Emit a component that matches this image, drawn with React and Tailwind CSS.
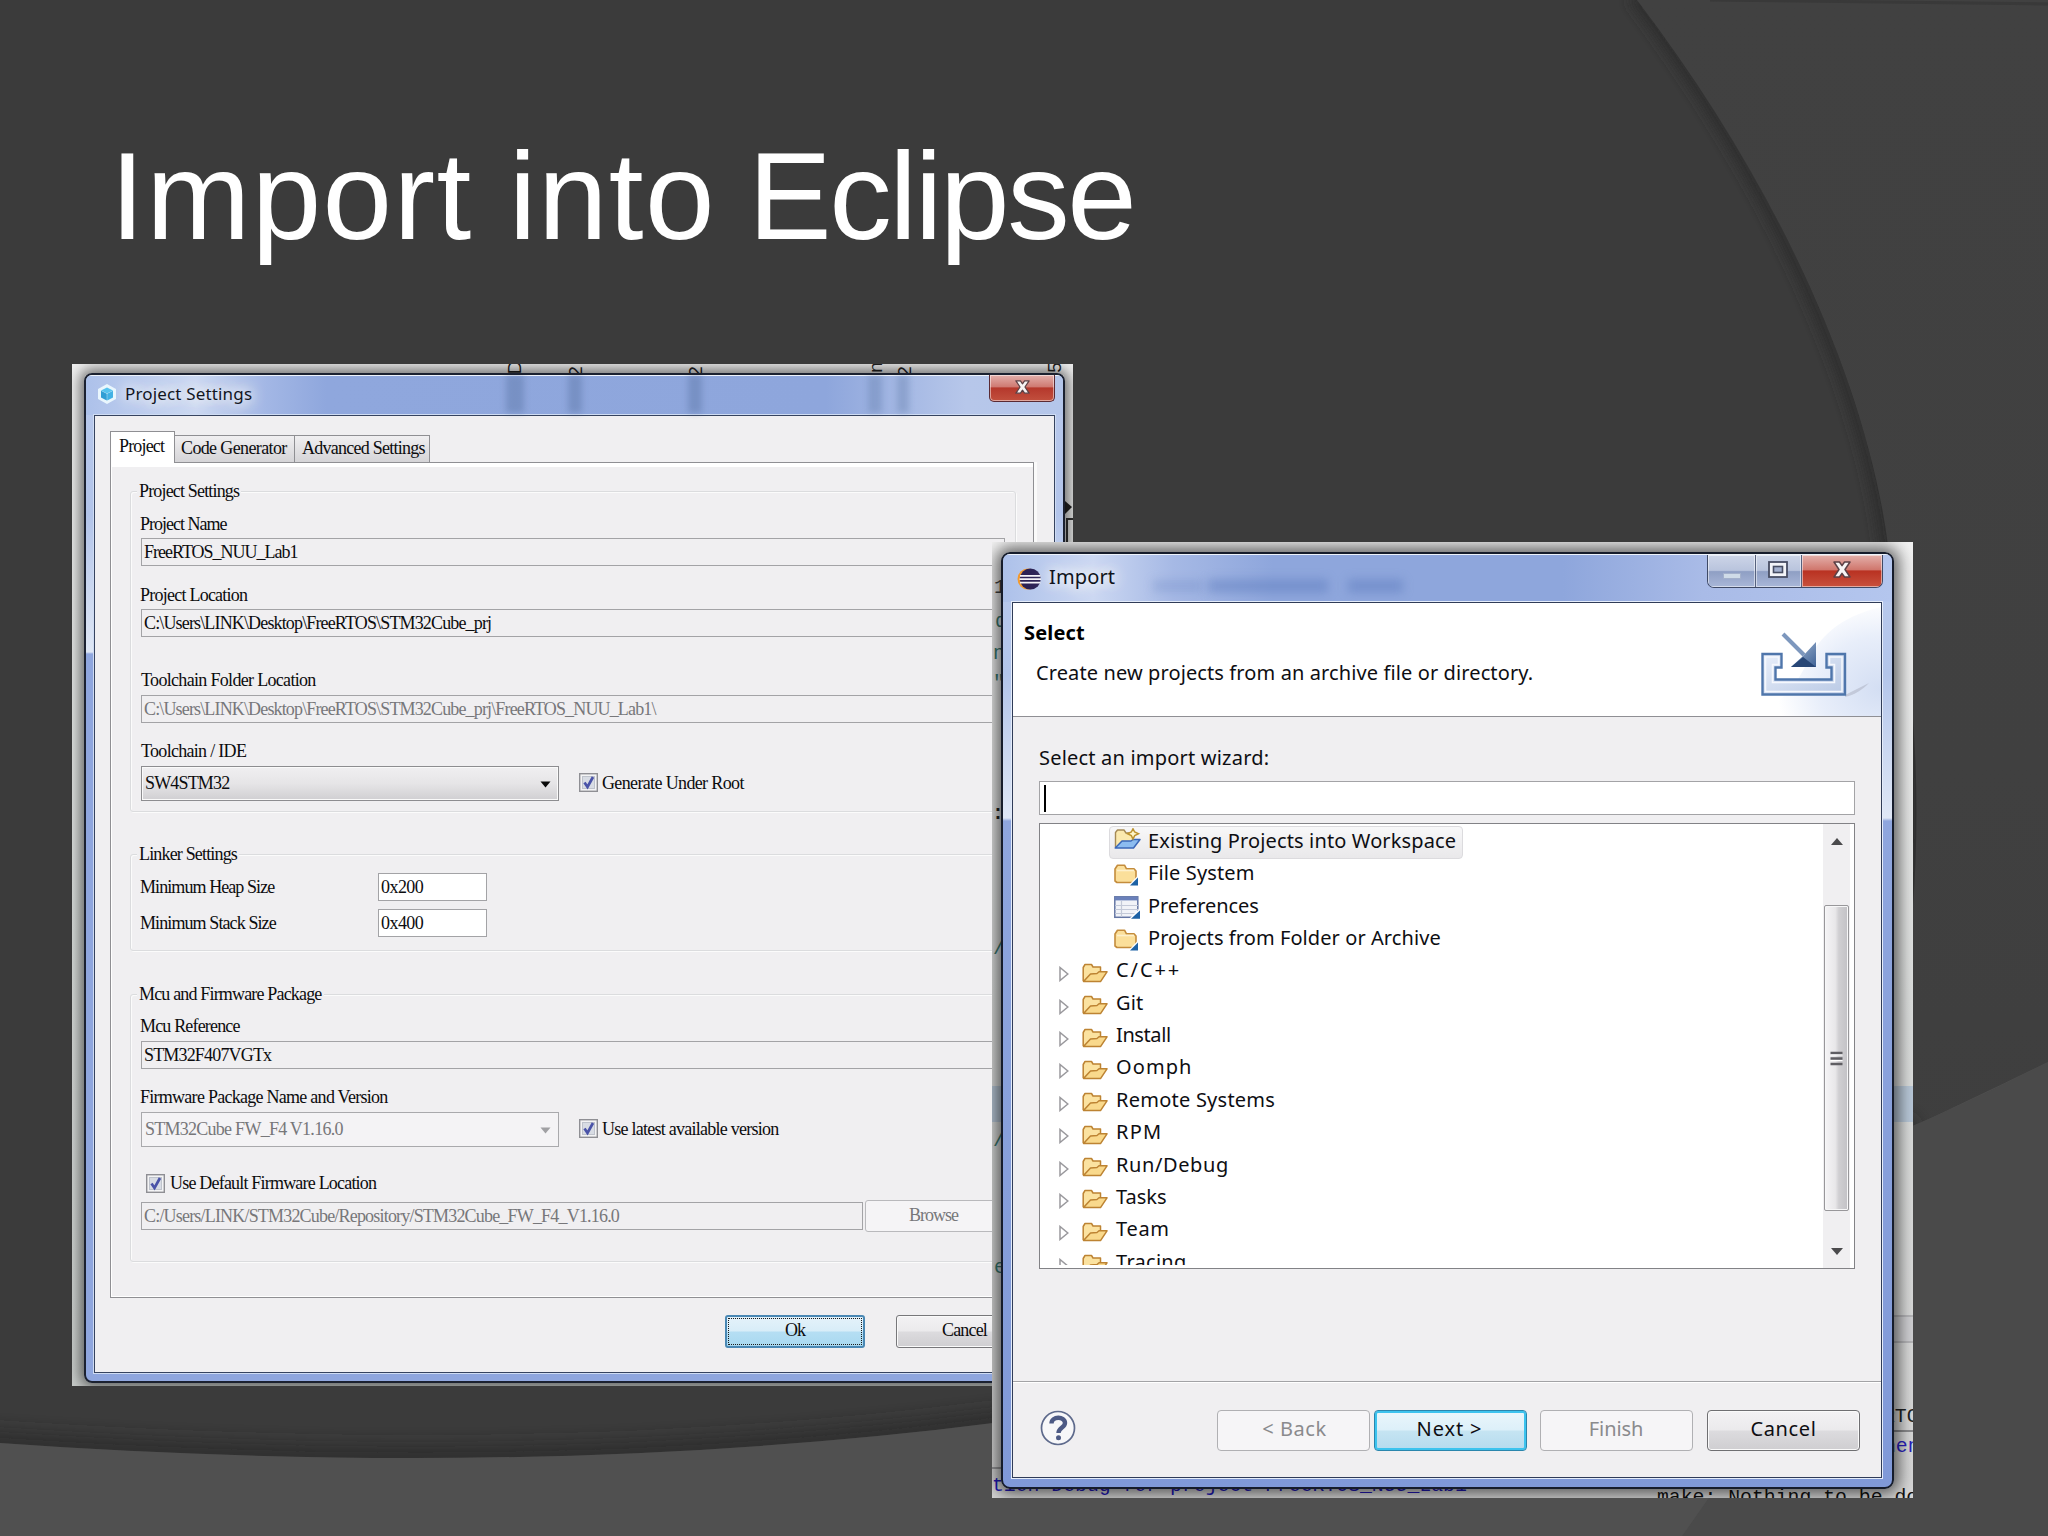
import clsx from "clsx";

const SERIF = "font-['Liberation_Serif',serif] text-[18px] leading-[20px] tracking-[-0.83px] whitespace-pre";
const SANS = "font-['Noto_Sans','Open_Sans',sans-serif] text-[20px] leading-[28px] tracking-[0.13px] whitespace-pre";
const MONO = "font-['Liberation_Mono',monospace] text-[19.8px] leading-[22px] whitespace-pre";

const treeItems = [
  { label: "Existing Projects into Workspace", icon: "workspace", child: true, selected: true },
  { label: "File System", icon: "folder", child: true },
  { label: "Preferences", icon: "table", child: true, track: "tracking-[-0.05px]" },
  { label: "Projects from Folder or Archive", icon: "folder", child: true, track: "tracking-[0.08px]" },
  { label: "C/C++", track: "tracking-[1.9px]" },
  { label: "Git" },
  { label: "Install", track: "tracking-[-0.4px]" },
  { label: "Oomph", track: "tracking-[1.1px]" },
  { label: "Remote Systems", track: "tracking-[0.24px]" },
  { label: "RPM", track: "tracking-[1.2px]" },
  { label: "Run/Debug", track: "tracking-[0.6px]" },
  { label: "Tasks", track: "tracking-[0px]" },
  { label: "Team", track: "tracking-[0.7px]" },
  { label: "Tracing", track: "tracking-[0.28px]" },
];

function SlideBackground() {
  return (
    <svg className="absolute inset-0" width="2048" height="1536" viewBox="0 0 2048 1536">
      <defs>
        <linearGradient id="side" x1="0" y1="0" x2="0" y2="1">
          <stop offset="0" stopColor="#414141" />
          <stop offset="0.5" stopColor="#404040" />
          <stop offset="1" stopColor="#3d3d3d" />
        </linearGradient>
        <filter id="soft" x="-20%" y="-20%" width="140%" height="140%">
          <feGaussianBlur stdDeviation="10" />
        </filter>
        <filter id="tight" x="-20%" y="-20%" width="140%" height="140%">
          <feGaussianBlur stdDeviation="6" />
        </filter>
        <clipPath id="aboveWave">
          <path d="M0 0H2048V1062C1640 1260 1340 1385 993 1423C660 1465 330 1466 0 1443Z" />
        </clipPath>
      </defs>
      <rect width="2048" height="1536" fill="#3b3b3b" />
      <path d="M1634 -4C1780 190 1866 390 1886 545C1940 790 1940 1180 1680 1536" fill="none" stroke="#2e2e2e" strokeWidth="14" filter="url(#tight)" />
      <path d="M1637 0C1782 190 1868 390 1888 545C1942 790 1942 1180 1682 1536H2048V0Z" fill="url(#side)" />
      <path d="M1710 0L2048 4" stroke="#393939" strokeWidth="3" />
      <g clipPath="url(#aboveWave)">
        <path d="M-40 1440C330 1466 660 1465 993 1423C1340 1385 1640 1260 1912 1126" fill="none" stroke="#2b2b2b" strokeWidth="18" filter="url(#soft)" />
      </g>
      <path d="M0 1443C330 1466 660 1465 993 1423C1340 1385 1640 1260 2048 1062V1536H0Z" fill="#505050" />
      <path d="M1912 1126C1960 1106 2000 1086 2048 1062V1536H1682C1780 1400 1880 1230 1912 1126Z" fill="#4a4a4a" />
    </svg>
  );
}

function CloseMark({ className }) {
  return (
    <svg className={className} width="18" height="17" viewBox="0 0 18 17">
      <path d="M1 1H6.5L9 4.6L11.5 1H17L12 8.5L17 16H11.5L9 12.4L6.5 16H1L6 8.5Z" fill="#f7f4f4" stroke="#5c4045" strokeWidth="1.5" strokeLinejoin="round" />
    </svg>
  );
}

function CubeIcon() {
  return (
    <svg width="20" height="20" viewBox="0 0 20 20">
      <path d="M10 0L19 5V15L10 20L1 15V5Z" fill="#e9f6fd" />
      <path d="M10 3.5L16 6.5L10 9.5L4 6.5Z" fill="#55c3ee" />
      <path d="M4 6.8L9.8 9.8V16.5L4 13.5Z" fill="#2f9ed4" />
      <path d="M16 6.8L10.2 9.8V16.5L16 13.5Z" fill="#3fb1e4" />
    </svg>
  );
}

function EclipseIcon() {
  return (
    <svg width="24" height="22" viewBox="0 0 24 22">
      <circle cx="11" cy="11" r="10.5" fill="#f39a2e" />
      <circle cx="13.3" cy="11" r="10.5" fill="#2c2255" />
      <path d="M3 7.8H23.5M2.5 11.2H24M3 14.6H23.5" stroke="#f4f2f8" strokeWidth="1.7" />
    </svg>
  );
}

function OpenFolderIcon() {
  return (
    <svg width="26" height="20" viewBox="0 0 26 20">
      <path d="M1.2 18V4.5L3 1.5H9.5L11 4H18.5V8" fill="#fbe2a0" stroke="#bd8332" strokeWidth="1.5" strokeLinejoin="round" />
      <path d="M1.5 18.6L8.5 11L15 10.5L17 8.8H25L18.5 18.6Z" fill="#f9d98c" stroke="#bd8332" strokeWidth="1.5" strokeLinejoin="round" />
    </svg>
  );
}

function FolderIcon() {
  return (
    <svg width="26" height="22" viewBox="0 0 26 22">
      <path d="M1 17V5L3.5 1.2H10.5L12.5 4.8H20L22 7V18.5H3Z" fill="#fbdf9a" stroke="#c48c3c" strokeWidth="1.6" strokeLinejoin="round" />
      <path d="M3 6.5H20" stroke="#fdf0cc" strokeWidth="1.6" />
      <path d="M14 22L24.5 11V22Z" fill="#fff" />
      <path d="M16 21.5L24 13.5V21.5Z" fill="#1d62a5" />
    </svg>
  );
}

function TableIcon() {
  return (
    <svg width="26" height="23" viewBox="0 0 26 23">
      <rect x="0.8" y="0.8" width="23" height="20.5" fill="#f1f3f8" stroke="#6577a5" strokeWidth="1.5" />
      <rect x="0.8" y="0.8" width="23" height="3.6" fill="#6a80ba" />
      <path d="M7.5 5V21M1 9.5H24M1 13.5H24M1 17.5H24" stroke="#c3c9d8" strokeWidth="1.2" />
      <path d="M15 23L26 12V23Z" fill="#fff" />
      <path d="M17 22.8L26 14.5V22.8Z" fill="#1d62a5" />
    </svg>
  );
}

function WorkspaceIcon() {
  return (
    <svg width="27" height="22" viewBox="0 0 27 22">
      <path d="M1.5 19V4.5L3.5 2H10L12 5H19V11" fill="#fbe9ae" stroke="#a58a55" strokeWidth="1.4" strokeLinejoin="round" />
      <path d="M1.2 20L8 13H17L19 11.5H26L19.5 20Z" fill="#8cbcf0" stroke="#3a67b8" strokeWidth="1.5" strokeLinejoin="round" />
      <path d="M19 0.8L20.7 4L24.5 5.8L20.7 7.6L19 11L17.3 7.6L13.5 5.8L17.3 4Z" fill="#fff6c8" stroke="#bd9330" strokeWidth="1.5" />
    </svg>
  );
}

function ImportBanner() {
  return (
    <svg width="170" height="113" viewBox="0 0 170 113">
      <defs>
        <radialGradient id="glow" cx="1" cy="0.75" r="0.8">
          <stop offset="0" stopColor="#d3def3" />
          <stop offset="0.6" stopColor="#e8eefa" />
          <stop offset="1" stopColor="#ffffff" />
        </radialGradient>
        <linearGradient id="tray" x1="0" y1="0" x2="1" y2="1">
          <stop offset="0" stopColor="#e9effa" />
          <stop offset="1" stopColor="#b9c9e5" />
        </linearGradient>
        <linearGradient id="arrow" x1="0" y1="0" x2="1" y2="1">
          <stop offset="0" stopColor="#a9bdd8" />
          <stop offset="1" stopColor="#3f6296" />
        </linearGradient>
      </defs>
      <path d="M170 4C128 14 108 34 96 60C82 88 70 100 40 113H170Z" fill="url(#glow)" />
      <path d="M134 92L158 80C152 86 144 92 134 94Z" fill="#a9aebd" opacity="0.5" />
      <path d="M51.5 51H70.5V64.5H64.5V76.5H120.5V64.5H115.5V51H134V91.5H51.5Z" fill="url(#tray)" stroke="#4f76ab" strokeWidth="2.4" />
      <path d="M54.5 54H67.5V61.5H61.5V79.5H123.5V61.5H118.5V54H131V88.5H54.5Z" fill="none" stroke="#f5f8fd" strokeWidth="1.5" />
      <path d="M72 31L93 52" stroke="#7d97bd" strokeWidth="4" />
      <path d="M105 39V64H80L92 53Z" fill="url(#arrow)" />
      <path d="M92 54L105 64H80Z" fill="#274676" />
    </svg>
  );
}

function CheckBox() {
  return (
    <svg width="19" height="19" viewBox="0 0 19 19">
      <rect x="0.7" y="0.7" width="17.6" height="17.6" fill="#f4f4f5" stroke="#8f8f94" strokeWidth="1.4" />
      <rect x="3.5" y="3.5" width="12" height="12" fill="#d8dce4" stroke="#bfc3cc" />
      <path d="M5.5 9.5L8.5 14L14 4" fill="none" stroke="#4a53a8" strokeWidth="2.7" />
    </svg>
  );
}

function Field({ children, className }) {
  return (
    <div className={clsx("flex h-[28px] items-center border border-[#a3a3a6] bg-[#f0eff1] pb-px pl-[2px]", className)}>
      {children}
    </div>
  );
}

function Combo({ children, disabled }) {
  return (
    <div
      className={clsx(
        "flex h-[35px] w-[418px] items-center justify-between border pr-[7px] pb-[2px] pl-[3px]",
        disabled
          ? "border-[#a9a9ac] bg-[#f4f3f5] text-[#77777a]"
          : "border-[#8d8d90] bg-linear-to-b from-[#f0eff1] via-[#e6e5e7] to-[#d0cfd2] shadow-[inset_0_0_0_1px_#fafafa]",
      )}
    >
      <span>{children}</span>
      <svg className="mt-[3px]" width="11" height="7" viewBox="0 0 11 7">
        <path d="M0.5 0.5H10.5L5.5 6.5Z" fill={disabled ? "#a0a0a3" : "#0a0a0a"} />
      </svg>
    </div>
  );
}

function Group({ title, className, children }) {
  return (
    <fieldset
      className={clsx("w-[886px] rounded-[3px] border border-[#dbdcde] pl-[10px] shadow-[inset_1px_1px_0_#fbfbfb,1px_1px_0_#fbfbfb]", className)}
    >
      <legend className="-ml-[4px] bg-[#f0eff1] px-[2px]">{title}</legend>
      {children}
    </fieldset>
  );
}

function ProjectSettings() {
  return (
    <div className="absolute top-[364px] left-[72px] h-[1022px] w-[1001px] overflow-hidden bg-linear-to-b from-[#f0f0f0] via-[#d9dddb] to-[#c9cdcb] pt-[9px] pl-[12px]">
      {/* pin labels of the chip view behind the window */}
      <div className="absolute -top-[5px] left-[436px] h-[17px] w-[560px] font-['Liberation_Sans',sans-serif] text-[19px] leading-[17px] text-[#222]">
        <span className="absolute left-0 -rotate-90">D</span>
        <span className="absolute top-[4px] left-[62px] -rotate-90">2</span>
        <span className="absolute top-[4px] left-[182px] -rotate-90">2</span>
        <span className="absolute left-[362px] -rotate-90">n</span>
        <span className="absolute top-[4px] left-[391px] -rotate-90">2</span>
        <span className="absolute left-[541px] -rotate-90">5</span>
      </div>
      <svg className="absolute top-[135px] right-0" width="10" height="80" viewBox="0 0 10 80">
        <path d="M2 2L9 8L2 15Z" fill="#222" />
        <path d="M4 80V20H10" fill="none" stroke="#333" strokeWidth="2" />
      </svg>

      <div className="relative h-[1010px] w-[981px] overflow-hidden rounded-[8px] border-2 border-[#1b2130] bg-[linear-gradient(to_bottom,#b9c9ec_0px,#b2c4ea_140px,#dfe7f5_277px,#8fa6de_279px,#8fa6de_100%)] px-[8px] pb-[8px] shadow-[0_0_14px_4px_rgba(0,0,0,0.55)]">
        <div className="-mx-[8px] flex h-[40px] justify-between border-t border-[#eef3fb] bg-[linear-gradient(to_right,#adc1ea_0px,#cbd8f1_110px,#a3b7e5_180px,#8fa7dd_240px,#8ea6dc_740px,#b7c7ea_880px,#b4c6ea_100%)] pr-[8px] pl-[11px]">
          <div className="flex items-start gap-[8px] pt-[8px]">
            <CubeIcon />
            <span className="-mt-[2px] font-['Noto_Sans',sans-serif] text-[17px] leading-[24px] tracking-[0.16px] text-[#12161f] [text-shadow:0_0_12px_#fff,0_0_16px_#fff,0_0_20px_#fff]">
              Project Settings
            </span>
          </div>
          <div className="-mt-px flex h-[27px] w-[66px] items-center justify-center rounded-b-[5px] border border-t-0 border-[#5a2a33] bg-[linear-gradient(to_bottom,#e3b0ac_0%,#cf7a72_45%,#b5382c_50%,#c2503e_100%)] shadow-[inset_0_0_0_1px_rgba(255,255,255,0.5)]">
            <CloseMark className="-mt-[2px] h-[14px] w-[15px]" />
          </div>
          <div className="absolute top-0 left-[420px] h-[38px] w-[18px] bg-[#54709f]/40 blur-[3px]" />
          <div className="absolute top-0 left-[482px] h-[38px] w-[14px] bg-[#54709f]/40 blur-[3px]" />
          <div className="absolute top-0 left-[602px] h-[38px] w-[14px] bg-[#54709f]/40 blur-[3px]" />
          <div className="absolute top-0 left-[782px] h-[38px] w-[14px] bg-[#54709f]/30 blur-[3px]" />
          <div className="absolute top-0 left-[811px] h-[38px] w-[12px] bg-[#54709f]/30 blur-[3px]" />
        </div>

        <div className={clsx(SERIF, "h-[958px] w-[961px] border border-[#36435f] bg-[#f0eff1] pt-[15px] pl-[15px] text-[#0c0c0e] shadow-[0_0_0_1px_#cfdcf3]")}>
          <div className="relative flex items-end">
            <div className="-mb-px h-[32px] w-[65px] border border-b-0 border-[#8f8f93] bg-white pt-[4px] pl-[8px]">Project</div>
            <div className="h-[27px] w-[120px] border border-b-0 border-l-0 border-[#8f8f93] bg-linear-to-b from-[#f0eff1] to-[#d5d4d7] pt-[2px] pl-[6px] tracking-[-0.63px]">
              Code Generator
            </div>
            <div className="h-[27px] w-[135px] border border-b-0 border-l-0 border-[#8f8f93] bg-linear-to-b from-[#f0eff1] to-[#d5d4d7] pt-[2px] pl-[7px] tracking-[-0.75px]">
              Advanced Settings
            </div>
          </div>

          <div className="h-[836px] w-[924px] border border-[#8f8f93] pt-[18px] pl-[19px] shadow-[inset_0_4px_0_#fff,inset_1px_-1px_0_#fff,3px_0_0_#fafafa]">
            <Group title="Project Settings" className="h-[331px]">
              <p className="mt-[13px] -ml-px tracking-[-1px]">Project Name</p>
              <Field className="mt-[4px] w-[864px] tracking-[-1px]">FreeRTOS_NUU_Lab1</Field>
              <p className="mt-[19px] -ml-px tracking-[-0.76px]">Project Location</p>
              <Field className="mt-[4px] w-[864px] tracking-[-0.85px]">C:\Users\LINK\Desktop\FreeRTOS\STM32Cube_prj</Field>
              <p className="mt-[33px] tracking-[-0.68px]">Toolchain Folder Location</p>
              <Field className="mt-[5px] w-[864px] tracking-[-0.85px] text-[#77777a]">
                C:\Users\LINK\Desktop\FreeRTOS\STM32Cube_prj\FreeRTOS_NUU_Lab1\
              </Field>
              <p className="mt-[18px] tracking-[-0.7px]">Toolchain / IDE</p>
              <div className="mt-[5px] flex items-center gap-[20px]">
                <Combo>SW4STM32</Combo>
                <div className="-mt-[2px] flex items-center gap-[4px] tracking-[-0.64px]">
                  <CheckBox />
                  Generate Under Root
                </div>
              </div>
            </Group>

            <Group title="Linker Settings" className="mt-[32px] h-[107px]">
              <div className="mt-[9px] flex items-center tracking-[-0.92px]">
                <span className="-ml-px w-[238px]">Minimum Heap Size</span>
                <Field className="w-[109px] bg-white tracking-[-0.55px]">0x200</Field>
              </div>
              <div className="mt-[8px] flex items-center tracking-[-0.9px]">
                <span className="-ml-px w-[238px]">Minimum Stack Size</span>
                <Field className="w-[109px] bg-white tracking-[-0.55px]">0x400</Field>
              </div>
            </Group>

            <Group title="Mcu and Firmware Package" className="mt-[33px] h-[278px]">
              <p className="mt-[12px] -ml-px">Mcu Reference</p>
              <Field className="mt-[5px] w-[864px]">STM32F407VGTx</Field>
              <p className="mt-[18px] -ml-px tracking-[-0.73px]">Firmware Package Name and Version</p>
              <div className="mt-[5px] flex items-center gap-[20px] tracking-[-0.74px]">
                <Combo disabled>STM32Cube FW_F4 V1.16.0</Combo>
                <div className="-mt-[2px] flex items-center gap-[4px] tracking-[-0.75px]">
                  <CheckBox />
                  Use latest available version
                </div>
              </div>
              <div className="mt-[26px] flex items-center gap-[5px] pl-[5px] tracking-[-0.8px]">
                <CheckBox />
                Use Default Firmware Location
              </div>
              <div className="mt-[7px] flex items-center gap-[2px] text-[#77777a]">
                <Field className="w-[722px] tracking-[-0.81px]">C:/Users/LINK/STM32Cube/Repository/STM32Cube_FW_F4_V1.16.0</Field>
                <div className="h-[32px] w-[140px] rounded-[3px] border border-[#b9b9bc] bg-[#f5f4f6] pt-[4px] pl-[43px] tracking-[-1px]">Browse</div>
              </div>
            </Group>
          </div>

          <div className="mt-[17px] flex gap-[31px] pl-[615px]">
            <div className="h-[33px] w-[140px] rounded-[3px] border-2 border-[#4a88b4] bg-[linear-gradient(to_bottom,#e4f2fa_0%,#d8edf8_48%,#b5def3_52%,#a9d9f0_100%)] p-px">
              <div className="h-full border border-dotted border-[#1a1a1a] pt-px text-center tracking-[-1px]">Ok</div>
            </div>
            <div className="h-[33px] w-[139px] rounded-[3px] border border-[#77777a] bg-[linear-gradient(to_bottom,#f3f2f4_0%,#ebeaec_48%,#dcdbde_52%,#cfced1_100%)] pt-[4px] pl-[45px] shadow-[inset_0_0_0_1px_#fafafa]">
              Cancel
            </div>
          </div>
        </div>
      </div>
    </div>
  );
}

function TreeRow({ item }) {
  const icons = { workspace: <WorkspaceIcon />, folder: <FolderIcon />, table: <TableIcon /> };

  if (item.child) {
    return (
      <div className="flex h-[32.4px] pl-[69px]">
        <div
          className={clsx(
            "flex h-[33px] items-center rounded-[4px] border pr-[6px] pl-[4px]",
            item.selected ? "mt-[2px] -mb-[3px] border-[#dcdbde] bg-linear-to-b from-[#f8f8f9] to-[#e9e8ea]" : "border-transparent",
          )}
        >
          <div className={clsx("flex w-[34px]", item.selected ? "-mt-[7px]" : "mt-[4px]")}>{icons[item.icon]}</div>
          <span className={clsx(item.track, item.selected ? "-mt-[3px]" : "mt-px")}>{item.label}</span>
        </div>
      </div>
    );
  }

  return (
    <div className="flex h-[32.4px] items-center pl-[19px]">
      <svg className="mt-[9px] mr-[13px]" width="10" height="16" viewBox="0 0 10 16">
        <path d="M1 1.5V14.5L8.8 8Z" fill="#fff" stroke="#9a999d" strokeWidth="1.5" />
      </svg>
      <div className="mt-[6px] mr-[8px]">
        <OpenFolderIcon />
      </div>
      <span className={clsx("mt-px", item.track)}>{item.label}</span>
    </div>
  );
}

function ScrollBar() {
  return (
    <div className="mr-[4px] flex h-full w-[27px] flex-col items-center bg-[#f0eff1]">
      <svg className="mt-[14px]" width="12" height="7" viewBox="0 0 12 7">
        <path d="M0 7L6 0L12 7Z" fill="#4a4a4c" />
      </svg>
      <div className="mt-[60px] flex h-[306px] w-[25px] items-center justify-center rounded-[2px] border border-[#98979a] bg-[linear-gradient(to_right,#f5f4f6_0%,#e8e7e9_45%,#d0cfd2_60%,#c2c1c5_100%)] shadow-[inset_0_0_0_1px_#f7f7f8]">
        <svg width="13" height="15" viewBox="0 0 13 15">
          <path d="M0.5 2H12.5M0.5 7.5H12.5M0.5 13H12.5" stroke="#5f5e63" strokeWidth="2.4" />
          <path d="M0.5 4H12.5M0.5 9.5H12.5" stroke="#fff" strokeWidth="1.2" />
        </svg>
      </div>
      <svg className="mt-[37px]" width="12" height="7" viewBox="0 0 12 7">
        <path d="M0 0H12L6 7Z" fill="#4a4a4c" />
      </svg>
    </div>
  );
}

function ImportDialog() {
  return (
    <div className="absolute top-[542px] left-[992px] h-[956px] w-[921px] overflow-hidden bg-linear-to-b from-[#f2f2f2] via-[#dcdedd] to-[#d6d6d6] pt-[10px] pl-[9px]">
      {/* editor and console left over behind the window */}
      <div className={clsx(MONO, "absolute inset-0")}>
        <span className="absolute top-[35px] left-[2px] text-[#444]">1</span>
        <span className="absolute top-[69px] left-[3px] text-[#3a7a70]">d</span>
        <span className="absolute top-[101px] left-[1px] text-[#3a7a70]">n</span>
        <span className="absolute top-[131px] left-[1px] text-[#3a7a70]">"</span>
        <span className="absolute top-[261px] left-0 font-bold text-[#222]">:</span>
        <span className="absolute top-[396px] left-[1px] text-[#3a7a70]">/</span>
        <span className="absolute top-[588px] left-[1px] text-[#3a7a70]">/</span>
        <span className="absolute top-[715px] left-[2px] text-[#3a7a70]">e</span>
        <div className="absolute top-[544px] left-0 h-[36px] w-full bg-[#b9c8d8]" />
        <div className="absolute top-[773px] right-0 h-[28px] w-[30px] border-t-2 border-b-2 border-[#b5b5b8] bg-[#cfcfd2]" />
        <span className="absolute top-[864px] left-[891px] text-[#222]">RTO</span>
        <div className="absolute top-[888px] right-0 h-[2px] w-[30px] bg-[#8a8a8c]" />
        <div className="absolute top-[925px] left-0 h-[2px] w-[20px] bg-[#9a9a9c]" />
        <span className="absolute top-[894px] left-[892px] text-[#2a1fc0]">nen</span>
        <span className="absolute top-[933px] left-0 text-[#2218b8]">tion Debug for project FreeRTOS_NUU_Lab1</span>
        <span className="absolute top-[945px] left-[665px] text-[#111]">make: Nothing to be done</span>
      </div>

      <div className="relative h-[937px] w-[893px] overflow-hidden rounded-[9px] border-2 border-[#161c2b] bg-[linear-gradient(to_bottom,#b9caee_0px,#b3c5ea_120px,#dfe7f6_264px,#8fa6de_267px,#8099d8_100%)] px-[9px] shadow-[0_0_16px_5px_rgba(0,0,0,0.6)]">
        <div className="-mx-[9px] flex h-[48px] justify-between border-t border-[#eef3fb] bg-[linear-gradient(to_right,#adc1ea_0px,#ccd8f2_90px,#a6b9e5_170px,#8ea6dc_270px,#8ea6dc_560px,#a9bbe7_700px,#b4c6ee_100%)] pr-[9px] pl-[14px]">
          <div className="absolute top-[26px] left-[150px] h-[12px] w-[50px] bg-[#5c79bd]/25 blur-[5px]" />
          <div className="absolute top-[25px] left-[205px] h-[14px] w-[120px] bg-[#5c79bd]/45 blur-[5px]" />
          <div className="absolute top-[25px] left-[345px] h-[14px] w-[55px] bg-[#5c79bd]/45 blur-[5px]" />
          <div className="relative flex items-start gap-[8px] pt-[13px]">
            <EclipseIcon />
            <span className={clsx(SANS, "-mt-[5px] text-[#10141c] [text-shadow:0_0_12px_#fff,0_0_16px_#fff,0_0_20px_#fff]")}>Import</span>
          </div>
          <div className="relative flex h-[33px] overflow-hidden rounded-b-[7px] border border-t-0 border-[#3f4a66]">
            <div className="flex w-[48px] items-end justify-center border-r border-[#56617e] bg-[linear-gradient(to_bottom,#cdd5e8_0%,#b9c4dd_48%,#8f9fc4_52%,#a9b7d8_100%)] pb-[8px] shadow-[inset_0_0_0_1px_rgba(255,255,255,0.5)]">
              <div className="h-[6px] w-[18px] border border-[#a3b0cb] bg-[#cfdbe8]" />
            </div>
            <div className="flex w-[46px] items-center justify-center border-r border-[#56617e] bg-[linear-gradient(to_bottom,#cdd5e8_0%,#b9c4dd_48%,#8f9fc4_52%,#a9b7d8_100%)] shadow-[inset_0_0_0_1px_rgba(255,255,255,0.5)]">
              <svg className="-mt-[3px] -ml-[2px]" width="20" height="17" viewBox="0 0 20 17">
                <rect x="1" y="1" width="18" height="15" fill="#f3f4f8" stroke="#474d63" strokeWidth="1.8" />
                <rect x="5.5" y="5.5" width="9" height="6" fill="#a3b0cf" stroke="#474d63" strokeWidth="1.6" />
              </svg>
            </div>
            <div className="flex w-[80px] items-center justify-center bg-[linear-gradient(to_bottom,#e4b1ac_0%,#d0776d_46%,#b93222_50%,#c8513d_100%)] shadow-[inset_0_0_0_1px_rgba(255,255,255,0.5)]">
              <CloseMark className="-mt-[4px]" />
            </div>
          </div>
        </div>

        <div className={clsx(SANS, "h-[876px] w-[870px] border border-[#303c58] bg-[#f0eff1] text-[#0e0e12] shadow-[0_0_0_1px_#e4ecfa]")}>
          <div className="flex h-[114px] justify-between border-b border-[#8f8f94] bg-white">
            <div className="pt-[16px] pl-[11px]">
              <h2 className="font-bold tracking-[0.16px] text-black">Select</h2>
              <p className="mt-[12px] pl-[12px] tracking-[0.11px]">Create new projects from an archive file or directory.</p>
            </div>
            <ImportBanner />
          </div>

          <div className="h-[665px] border-b border-[#a3a3a6] pt-[27px] pl-[26px] shadow-[0_1px_0_#fff]">
            <p className="tracking-[0.2px]">Select an import wizard:</p>
            <div className="mt-[9px] h-[34px] w-[816px] border border-[#a3a3a6] bg-white pt-[3px] pl-[4px]">
              <div className="h-[27px] w-[2px] bg-black" />
            </div>
            <div className="mt-[8px] flex h-[446px] w-[816px] justify-between overflow-hidden border border-[#828286] bg-white">
              <div className="h-[441px] overflow-hidden">
                {treeItems.map((item) => (
                  <TreeRow key={item.label} item={item} />
                ))}
              </div>
              <ScrollBar />
            </div>
          </div>

          <div className="flex items-start pt-[28px] pl-[27px]">
            <svg className="mr-[141px]" width="36" height="36" viewBox="0 0 36 36">
              <circle cx="18" cy="18" r="16.5" fill="#f7f7f9" stroke="#5e6a8c" strokeWidth="1.7" />
              <path d="M11.5 13.5C11.5 6 25 6 25 13C25 17.5 18.5 17.5 18.5 23" fill="none" stroke="#4d5a85" strokeWidth="4.4" />
              <circle cx="18.5" cy="27.8" r="2.5" fill="#4d5a85" />
            </svg>
            <div className="flex text-center leading-[36px]">
              <div className="h-[41px] w-[153px] rounded-[4px] border border-[#b0b0b3] bg-[#f6f5f7] pl-[2px] tracking-[0.57px] text-[#8a8a8d]">&lt; Back</div>
              <div className="ml-[4px] h-[41px] w-[153px] rounded-[4px] border border-[#2a86ad] bg-[linear-gradient(to_bottom,#eaf6fb_0%,#ddf0f9_48%,#c5e4f2_52%,#b5dbee_100%)] pr-[2px] tracking-[0.9px] shadow-[inset_0_0_0_2px_#3cc3ee]">
                Next &gt;
              </div>
              <div className="ml-[13px] h-[41px] w-[153px] rounded-[4px] border border-[#b0b0b3] bg-[#f6f5f7] pr-px tracking-[-0.1px] text-[#8a8a8d]">Finish</div>
              <div className="ml-[14px] h-[41px] w-[153px] rounded-[4px] border border-[#6f6f72] bg-[linear-gradient(to_bottom,#f3f2f4_0%,#ebeaec_48%,#dcdbde_52%,#cfced1_100%)] tracking-[0.6px] shadow-[inset_0_0_0_1px_#fafafa]">
                Cancel
              </div>
            </div>
          </div>
        </div>
      </div>
    </div>
  );
}

export default function App() {
  return (
    <div className="relative h-[1536px] w-[2048px] overflow-hidden bg-[#3b3b3b]">
      <SlideBackground />
      <h1 className="relative pt-[126px] pl-[110px] font-['Liberation_Sans',Arial,sans-serif] text-[125px] leading-[140px] whitespace-pre text-white">
        <span className="tracking-[1.4px]">Import into</span>
        <span className="tracking-[-2.4px]"> Eclipse</span>
      </h1>
      <ProjectSettings />
      <ImportDialog />
    </div>
  );
}
